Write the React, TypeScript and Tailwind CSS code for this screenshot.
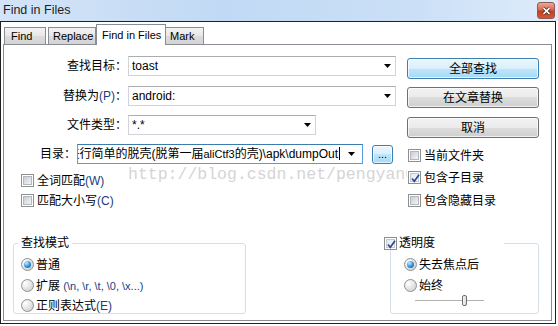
import type { ReactNode } from "react";

const acc = "text-[#203c80]";

function Arrow() {
  return (
    <svg width="7" height="4" viewBox="0 0 7 4">
      <path d="M0 0h7L3.5 4z" fill="#000" />
    </svg>
  );
}

function Combo(props: { className: string; children?: ReactNode; focused?: boolean }) {
  const { className, children, focused } = props;
  return (
    <div
      className={
        "flex h-[20px] items-center bg-white " +
        (focused
          ? "border border-[#569de5] border-t-[#3d7bad] "
          : "border border-[#d0d4da] border-t-[#abadb3] ") +
        className
      }
    >
      <div className="min-w-0 flex-1 overflow-hidden whitespace-nowrap pl-[3px]">{children}</div>
      <div className="flex w-[16px] shrink-0 justify-center">
        <Arrow />
      </div>
    </div>
  );
}

function Btn(props: { children: ReactNode; primary?: boolean }) {
  return (
    <button
      className={
        "flex h-[21px] w-[132px] items-center justify-center rounded-[3px] border text-[12px] shadow-[inset_0_0_0_1px_rgba(255,255,255,0.7)] " +
        (props.primary
          ? "border-[#3c7fb1] bg-[linear-gradient(#eaf6fd,#d9f0fc_50%,#bee6fd_50%,#a7d9f5)]"
          : "border-[#707070] bg-[linear-gradient(#f2f2f2,#ebebeb_50%,#dddddd_50%,#cfcfcf)]")
      }
    >
      {props.children}
    </button>
  );
}

function Check(props: { checked?: boolean }) {
  return (
    <span className="relative flex h-[13px] w-[13px] shrink-0 items-center justify-center border border-[#8e8f8f] bg-white">
      <span
        className={
          "h-[9px] w-[9px] border " +
          (props.checked
            ? "border-[#c2cad6] bg-[linear-gradient(135deg,#dfe6ef,#ffffff)]"
            : "border-[#b4b8be] bg-[linear-gradient(135deg,#c9cdd3,#f4f5f6)]")
        }
      />
      {props.checked && (
        <svg className="absolute left-[1px] top-[1px]" width="11" height="11" viewBox="0 0 11 11">
          <path d="M2 5.5 L4.3 8.3 L9 1.8" fill="none" stroke="#2f4a8e" strokeWidth="1.7" />
        </svg>
      )}
    </span>
  );
}

function Radio(props: { on?: boolean }) {
  return (
    <span className="flex h-[13px] w-[13px] shrink-0 items-center justify-center rounded-full border border-[#8c9296] bg-[radial-gradient(circle_at_30%_30%,#ffffff,#e2e2e2_55%,#c4c4c4)]">
      {props.on && (
        <span className="h-[7px] w-[7px] rounded-full bg-[radial-gradient(circle_at_35%_30%,#c6ecff,#2d8fd8_55%,#0c4d8f)]" />
      )}
    </span>
  );
}

function Opt(props: { children: ReactNode; checked?: boolean }) {
  return (
    <div className="flex h-[13px] items-center gap-[3px] bg-white whitespace-nowrap">
      <Check checked={props.checked} />
      <span>{props.children}</span>
    </div>
  );
}

function RadioRow(props: { children: ReactNode; on?: boolean }) {
  return (
    <div className="flex h-[13px] items-center gap-[2px] whitespace-nowrap">
      <Radio on={props.on} />
      <span>{props.children}</span>
    </div>
  );
}

const tabBg = "bg-[linear-gradient(#f4f4f4,#e6e6e6_50%,#dcdcdc_50%,#d4d4d4)]";

export default function App() {
  return (
    <div className="relative h-[326px] w-[558px] overflow-hidden bg-white font-['Liberation_Sans','Noto_Sans_CJK_SC',sans-serif] text-[12px] leading-[14px] text-black">
      <div className="absolute left-[128px] top-[165px] w-[279px] overflow-hidden whitespace-nowrap font-['Liberation_Mono',monospace] text-[16.5px] leading-[20px] text-[#d5d5d5]">
        http://blog.csdn.net/pengyan0812
      </div>

      <div className="relative">
        {/* title bar */}
        <div className="flex h-[21px] items-start justify-between bg-[linear-gradient(to_right,#d3e4f7,#c1d9f4_40%,#cbe0f7_75%,#dfecfb)] pl-[3px] pr-[3px]">
          <span className="mt-[4px] text-[12.5px] leading-[13px] text-[#1e1e1e]">Find in Files</span>
          <div className="mt-[2px] flex h-[17px] w-[18px] items-center justify-center rounded-[3px] border border-[#8b5a52] bg-[linear-gradient(#eaa898,#d66a54_45%,#c2401f_55%,#d2573a)]">
            <svg width="9" height="8" viewBox="0 0 9 8">
              <path d="M1.5 1.2 L7.5 6.8 M7.5 1.2 L1.5 6.8" stroke="#4a1a10" strokeWidth="3.2" />
              <path d="M1.5 1.2 L7.5 6.8 M7.5 1.2 L1.5 6.8" stroke="#ffffff" strokeWidth="1.7" />
            </svg>
          </div>
        </div>

        {/* window body */}
        <div className="h-[303px] w-[556px] border border-[#202020]">
          {/* tabs */}
          <div className="flex h-[22px] items-end pl-[3px] text-[11px]">
            <div className={"flex h-[17px] w-[42px] items-center border border-b-0 border-[#898c95] pl-[6px] " + tabBg}>
              Find
            </div>
            <div className={"ml-[2px] flex h-[17px] w-[48px] items-center border border-b-0 border-[#898c95] pl-[4px] " + tabBg}>
              Replace
            </div>
            <div className="relative z-10 -mb-[1px] flex h-[21px] w-[70px] items-start border border-b-0 border-[#898c95] bg-white pl-[5px] pt-[3px]">
              Find in Files
            </div>
            <div className={"flex h-[17px] w-[38px] items-center border border-b-0 border-l-0 border-[#898c95] pl-[4px] " + tabBg}>
              Mark
            </div>
          </div>

          {/* panel */}
          <div className="ml-[2px] h-[277px] w-[549px] border border-[#898c95]">
            {/* block 1 */}
            <div className="mt-[11px] flex">
              <div className="flex w-[392px] flex-col">
                <div className="flex h-[20px] items-center">
                  <span className="w-[123px] text-right">查找目标：</span>
                  <Combo className="ml-[1px] w-[268px]">toast</Combo>
                </div>
                <div className="mt-[10px] flex h-[20px] items-center">
                  <span className="w-[123px] text-right">
                    替换为<span className={acc}>(P)</span>：
                  </span>
                  <Combo className="ml-[1px] w-[268px]">android:</Combo>
                </div>
                <div className="mt-[9px] flex h-[20px] items-center">
                  <span className="w-[123px] text-right">文件类型：</span>
                  <Combo className="ml-[1px] w-[188px]">*.*</Combo>
                </div>
              </div>
              <div className="ml-[11px] mt-[2px] flex flex-col">
                <Btn primary>全部查找</Btn>
                <div className="mt-[8px]">
                  <Btn>在文章替换</Btn>
                </div>
                <div className="mt-[9px]">
                  <Btn>取消</Btn>
                </div>
              </div>
            </div>

            {/* block 2 */}
            <div className="mt-[6px] flex h-[63px]">
              <div className="flex w-[404px] flex-col">
                <div className="flex h-[20px] items-center">
                  <span className="w-[72px] text-right">目录：</span>
                  <div className="ml-[1px] flex h-[20px] w-[286px] items-center border border-[#569de5] border-t-[#3d7bad] bg-white">
                    <div className="flex w-[262px] justify-end overflow-hidden whitespace-nowrap">
                      <span>
                        进行简单的脱壳(脱第一届<span className="text-[11px]">aliCtf3</span>的壳)\apk\dumpOut
                      </span>
                      <span className="ml-[1px] h-[13px] w-[1px] shrink-0 bg-black" />
                    </div>
                    <div className="flex flex-1 justify-center">
                      <Arrow />
                    </div>
                  </div>
                  <button className="ml-[9px] mt-[1px] flex h-[19px] w-[21px] items-end justify-center rounded-[3px] border border-[#3c7fb1] bg-[linear-gradient(#eaf6fd,#d9f0fc_50%,#bee6fd_50%,#a7d9f5)] pb-[3px] text-[11px] leading-[11px] shadow-[inset_0_0_0_1px_rgba(255,255,255,0.7)]">
                    ...
                  </button>
                </div>
                <div className="mt-[10px] pl-[17px]">
                  <div className="inline-block">
                    <Opt>
                      全词匹配<span className={acc}>(W)</span>
                    </Opt>
                  </div>
                </div>
                <div className="mt-[6px] pl-[17px]">
                  <div className="inline-block">
                    <Opt>
                      匹配大小写<span className={acc}>(C)</span>
                    </Opt>
                  </div>
                </div>
              </div>
              <div className="flex flex-col">
                <div className="mt-[5px]">
                  <Opt>当前文件夹</Opt>
                </div>
                <div className="mt-[9px]">
                  <Opt checked>包含子目录</Opt>
                </div>
                <div className="mt-[10px]">
                  <Opt>包含隐藏目录</Opt>
                </div>
              </div>
            </div>

            {/* block 3 */}
            <div className="mt-[36px] flex items-start">
              <div className="relative ml-[9px] h-[71px] w-[233px] rounded-[3px] border border-[#d5dfe5] pl-[7px] pt-[14px]">
                <span className="absolute left-[4px] top-[-8px] bg-white px-[3px]">查找模式</span>
                <RadioRow on>普通</RadioRow>
                <div className="mt-[8px]">
                  <RadioRow>
                    扩展 <span className={"text-[11px] " + acc}>(\n, \r, \t, \0, \x...)</span>
                  </RadioRow>
                </div>
                <div className="mt-[7px]">
                  <RadioRow>
                    正则表达式<span className={acc}>(E)</span>
                  </RadioRow>
                </div>
              </div>
              <div className="relative ml-[144px] h-[71px] w-[149px] rounded-[3px] border border-[#d5dfe5] pl-[13px] pt-[14px]">
                <div className="absolute left-[-7px] top-[-8px] flex h-[14px] w-[120px] items-center gap-[2px] bg-white">
                  <Check checked />
                  <span>透明度</span>
                </div>
                <RadioRow on>失去焦点后</RadioRow>
                <div className="mt-[8px]">
                  <RadioRow>始终</RadioRow>
                </div>
                <div className="relative ml-[11px] mt-[3px] flex h-[11px] w-[69px] items-center">
                  <div className="h-[2px] w-full border-t border-[#b0b0b0] bg-white" />
                  <div className="absolute left-[47px] top-0 h-[11px] w-[5px] rounded-[2px] border border-[#707070] bg-[linear-gradient(to_right,#f4f4f4,#dcdcdc)]" />
                </div>
              </div>
            </div>
          </div>
        </div>
      </div>
    </div>
  );
}
